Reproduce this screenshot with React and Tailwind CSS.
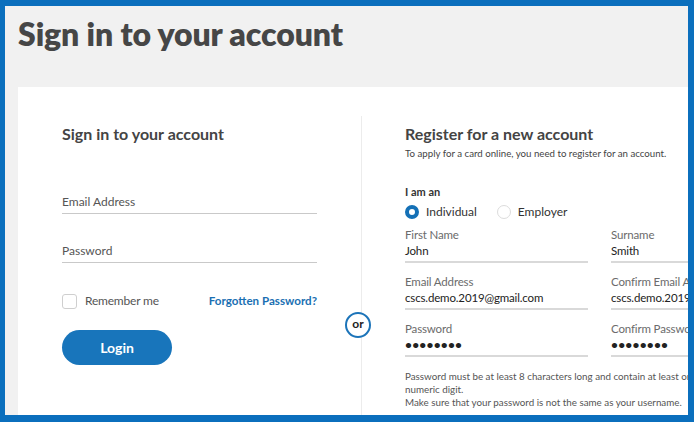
import { useState } from 'react'

const font = { fontFamily: 'Lato, "Open Sans", sans-serif' }

const Field = ({ label, value, dots }) => (
  <div className="border-b-2 border-[#d9d9d9] pb-[2px]">
    <div className="text-[11.5px] leading-[16px] tracking-[-0.15px] text-[#6b6b6b] whitespace-nowrap">{label}</div>
    {dots ? (
      <div className="text-[12px] leading-[16px] font-bold tracking-[0.2px] text-[#222]">••••••••</div>
    ) : (
      <div className="text-[11.5px] leading-[16px] tracking-[-0.15px] text-[#222] whitespace-nowrap">{value}</div>
    )}
  </div>
)

const Radio = ({ checked, label, onClick }) => (
  <button type="button" onClick={onClick} className="flex items-center gap-[7px]">
    <span
      className={
        checked
          ? 'w-[14px] h-[14px] rounded-full border-[4px] border-[#1470b6] bg-white'
          : 'w-[14px] h-[14px] rounded-full border border-[#dcdcdc] bg-white'
      }
    />
    <span className="text-[12px] leading-[16px] text-[#333]">{label}</span>
  </button>
)

const App = () => {
  const [accountType, setAccountType] = useState('individual')
  const [remember, setRemember] = useState(false)

  return (
    <div className="w-[694px] h-[422px] bg-[#0b6fbd] pt-[6px] pl-[5px] pr-[6px] pb-[7px]" style={font}>
      <div className="w-full h-full bg-[#f1f1f1] overflow-hidden pl-[13px]">
        <h1 className="text-[32px] leading-[40px] font-extrabold text-[#464646] pt-[8px] tracking-[-0.1px]">
          Sign in to your account
        </h1>

        <div className="mt-[33px] w-[760px] h-[400px] bg-white pl-[44px] pt-[29px] flex">
          {/* sign in column */}
          <div className="w-[255px] shrink-0">
            <h2 className="mt-[8px] text-[16px] leading-[20px] font-bold text-[#444]">Sign in to your account</h2>

            <div className="mt-[50px] border-b border-[#c9c9c9] pb-[3px]">
              <div className="text-[12px] leading-[16px] text-[#555]">Email Address</div>
            </div>
            <div className="mt-[29px] border-b border-[#c9c9c9] pb-[3px]">
              <div className="text-[12px] leading-[16px] text-[#555]">Password</div>
            </div>

            <div className="mt-[30px] flex items-center justify-between h-[16px]">
              <label className="flex items-center gap-[8px] cursor-pointer">
                <input
                  type="checkbox"
                  checked={remember}
                  onChange={(e) => setRemember(e.target.checked)}
                  className="appearance-none w-[15px] h-[15px] rounded-[3px] border border-[#cfcfcf] bg-white checked:bg-[#1470b6]"
                />
                <span className="text-[12px] tracking-[-0.2px] text-[#555]">Remember me</span>
              </label>
              <a href="#" className="text-[11.6px] font-bold text-[#1a6fb2]">Forgotten Password?</a>
            </div>

            <button
              type="button"
              className="mt-[21px] w-[110px] h-[35px] rounded-full bg-[#1875bb] text-white text-[14px] font-bold"
            >
              Login
            </button>
          </div>

          {/* divider */}
          <div className="w-[88px] shrink-0 relative flex justify-center">
            <div className="w-px h-full bg-[#ececec]" />
            <div className="absolute top-[196px] left-[41px] -translate-x-1/2 w-[26px] h-[26px] rounded-full border-2 border-[#1c74b9] bg-white flex items-center justify-center text-[12px] font-bold text-[#222] leading-none pb-[2px]">
              or
            </div>
          </div>

          {/* register column */}
          <div className="w-[420px] shrink-0">
            <h2 className="mt-[8px] text-[16px] leading-[20px] font-bold text-[#444]">Register for a new account</h2>
            <p className="mt-[3px] text-[9.7px] leading-[13px] text-[#444]">
              To apply for a card online, you need to register for an account.
            </p>

            <p className="mt-[25px] text-[11px] leading-[14px] font-bold text-[#333]">I am an</p>
            <div className="mt-[4px] flex items-center gap-[20px] h-[18px]">
              <Radio checked={accountType === 'individual'} label="Individual" onClick={() => setAccountType('individual')} />
              <Radio checked={accountType === 'employer'} label="Employer" onClick={() => setAccountType('employer')} />
            </div>

            <div className="mt-[6px] grid grid-cols-[183px_183px] gap-x-[23px] gap-y-[11px]">
              <Field label="First Name" value="John" />
              <Field label="Surname" value="Smith" />
              <Field label="Email Address" value="cscs.demo.2019@gmail.com" />
              <Field label="Confirm Email Address" value="cscs.demo.2019@gmail.com" />
              <Field label="Password" dots />
              <Field label="Confirm Password" dots />
            </div>

            <div className="mt-[13px] text-[9.8px] leading-[13px] text-[#555]">
              <p>Password must be at least 8 characters long and contain at least one uppercase letter and one</p>
              <p>numeric digit.</p>
              <p>Make sure that your password is not the same as your username.</p>
            </div>
          </div>
        </div>
      </div>
    </div>
  )
}

export default App
